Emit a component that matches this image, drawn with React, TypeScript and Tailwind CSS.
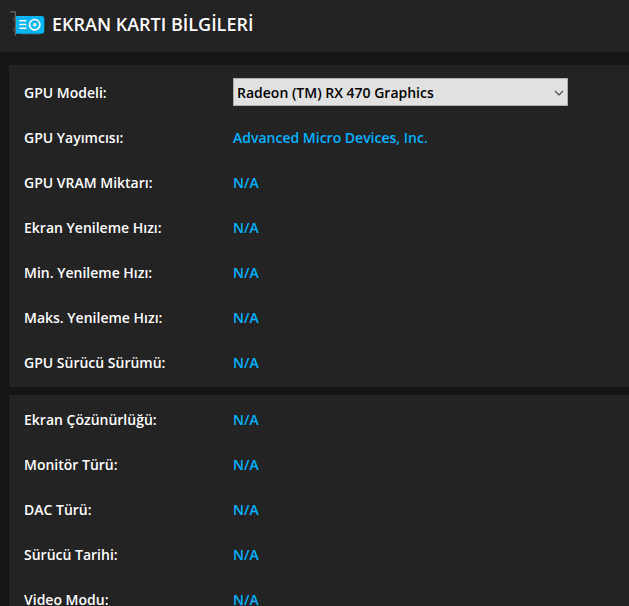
const gpuRows = [
    { label: 'GPU Yayımcısı:', value: 'Advanced Micro Devices, Inc.' },
    { label: 'GPU VRAM Miktarı:', value: 'N/A' },
    { label: 'Ekran Yenileme Hızı:', value: 'N/A' },
    { label: 'Min. Yenileme Hızı:', value: 'N/A' },
    { label: 'Maks. Yenileme Hızı:', value: 'N/A' },
    { label: 'GPU Sürücü Sürümü:', value: 'N/A' },
];

const displayRows = [
    { label: 'Ekran Çözünürlüğü:', value: 'N/A' },
    { label: 'Monitör Türü:', value: 'N/A' },
    { label: 'DAC Türü:', value: 'N/A' },
    { label: 'Sürücü Tarihi:', value: 'N/A' },
    { label: 'Video Modu:', value: 'N/A' },
];

const GpuIcon: React.FC = () => (
    <svg className="w-9 h-7 shrink-0" viewBox="0 0 36 28" fill="none" aria-hidden="true">
        <path d="M4 7.500v3.500M4 17.500v4" stroke="#3c3c3c" strokeWidth="2" />
        <path d="M12 24.200h7M21 24.200h8" stroke="#3c3c3c" strokeWidth="1.5" />
        <path d="M0 1.900h5.400v23.600" stroke="#666666" strokeWidth="1.2" />
        <path d="M6 6h25.300a3 3 0 0 1 3 3v11.700a3 3 0 0 1-3 3H6z" fill="#06b6f4" />
        <path d="M9.300 10.700h7M9.300 14.500h7M9.300 18.300h7" stroke="#ffffff" strokeWidth="1.5" />
        <circle cx="24.700" cy="14.700" r="5.200" stroke="#ffffff" strokeWidth="1.6" />
        <circle cx="24.700" cy="14.700" r="1.700" fill="#ffffff" />
    </svg>
);

const InfoRow: React.FC<{ label: string; value: string }> = ({ label, value }) => (
    <div className="flex items-center h-[45px] pt-0.5">
        <dt className="w-[209px] shrink-0 text-white">{label}</dt>
        <dd className="text-[#00b4ff]">{value}</dd>
    </div>
);

const App: React.FC = () => (
    <div className="flex flex-col h-screen overflow-hidden bg-[#151515] font-['Open_Sans',sans-serif] text-sm leading-5 font-semibold">
        <header className="flex items-center gap-1.5 h-[52px] shrink-0 pl-2.5 pb-1 bg-[#232323]">
            <GpuIcon />
            <h1 className="text-lg leading-6 font-semibold text-white">EKRAN KARTI BİLGİLERİ</h1>
        </header>
        <main className="flex flex-col flex-1 min-h-0 gap-2 pt-[13px] pl-[9px]">
            <section className="shrink-0 pt-1 pb-[3px] pl-[15px] bg-[#232323]">
                <div className="flex items-center h-[45px]">
                    <label htmlFor="gpu" className="w-[209px] shrink-0 pt-0.5 text-white">GPU Modeli:</label>
                    <div className="relative w-[335px]">
                        <select
                            id="gpu"
                            className="block w-full h-7 pt-0.5 pl-[3px] pr-6 appearance-none border border-[#adadad] bg-[#e1e1e1] text-black"
                        >
                            <option>Radeon (TM) RX 470 Graphics</option>
                        </select>
                        <svg
                            className="absolute right-1 top-2.5 w-2.5 h-2.5 pointer-events-none"
                            viewBox="0 0 10 10"
                            fill="none"
                            aria-hidden="true"
                        >
                            <path d="M1 3l4 4 4-4" stroke="#505050" strokeWidth="1.2" />
                        </svg>
                    </div>
                </div>
                <dl>
                    {gpuRows.map((row) => (
                        <InfoRow key={row.label} label={row.label} value={row.value} />
                    ))}
                </dl>
            </section>
            <section className="flex-1 min-h-0 overflow-hidden pt-px pl-[15px] bg-[#232323]">
                <dl>
                    {displayRows.map((row) => (
                        <InfoRow key={row.label} label={row.label} value={row.value} />
                    ))}
                </dl>
            </section>
        </main>
    </div>
);

export default App;
